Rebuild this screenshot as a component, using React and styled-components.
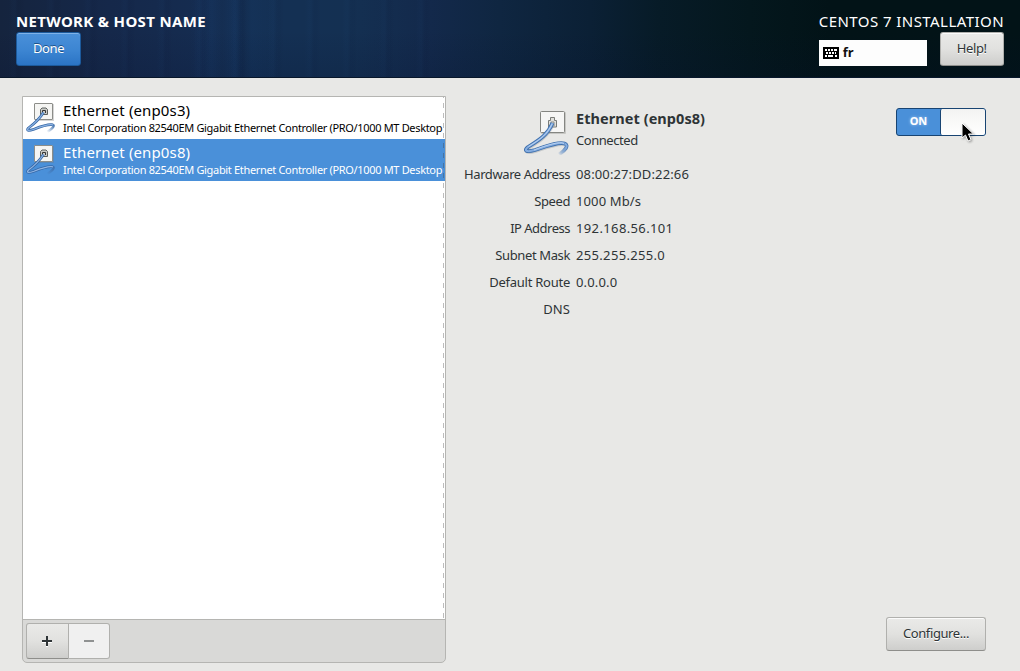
import React from "react";
import styled, { createGlobalStyle, css } from "styled-components";

const GlobalStyle = createGlobalStyle`
  * { box-sizing: border-box; }
  body {
    margin: 0;
    background: #e8e8e6;
    color: #2e3436;
    font: 13px/20px "Noto Sans", "Open Sans", sans-serif;
    overflow: hidden;
  }
`;

const Page = styled.div`
  display: flex;
  flex-direction: column;
  width: 1020px;
  height: 671px;
`;

const Header = styled.header`
  display: flex;
  flex: none;
  justify-content: space-between;
  height: 78px;
  padding: 11px 16px 0;
  color: #fff;
  border-bottom: 1px solid #08172b;
  background:
    linear-gradient(rgba(0, 0, 0, 0) 40%, rgba(5, 15, 45, 0.16)),
    repeating-linear-gradient(90.5deg, rgba(40, 100, 170, 0) 0 9px, rgba(40, 100, 170, 0.03) 13px 15px, rgba(0, 0, 30, 0.04) 18px 21px, rgba(0, 0, 0, 0) 25px 37px) 0 0 / 430px 100% no-repeat,
    linear-gradient(90deg, rgba(0, 0, 0, 0) 190px, rgba(24, 66, 120, 0.18) 212px, rgba(0, 0, 0, 0) 222px, rgba(24, 66, 120, 0.16) 234px, rgba(0, 0, 20, 0.06) 243px, rgba(24, 66, 120, 0.1) 252px, rgba(0, 0, 0, 0) 280px),
    linear-gradient(90deg, #15243e 0, #15284a 110px, #152c50 200px, #143054 250px, #143052 350px, #13294b 430px, #0f2641 500px, #0b2035 590px, #071b27 660px, #04171d 750px, #021317 830px, #021317 100%);
`;

const HeaderSide = styled.div`
  display: flex;
  flex-direction: column;
  align-items: flex-start;
`;

const Title = styled.div`
  height: 21px;
  line-height: 21px;
  font-size: 15px;
  font-weight: ${(p) => (p.$bold ? 700 : 400)};
  letter-spacing: ${(p) => (p.$bold ? 0.33 : 0.44)}px;
  white-space: nowrap;
`;

const HeaderControls = styled.div`
  display: flex;
  align-items: flex-end;
  gap: 13px;
`;

const KeyboardLayout = styled.div`
  display: flex;
  align-items: center;
  gap: 4px;
  width: 108px;
  height: 26px;
  padding-left: 4px;
  background: #fdfdfd;
  color: #111;
  font-weight: 700;
  line-height: 24px;
`;

const LayoutName = styled.span`
  height: 26px;
`;

const Button = styled.button`
  display: flex;
  align-items: center;
  justify-content: center;
  width: ${(p) => p.$width}px;
  height: 34px;
  padding: 0 0 3px;
  font: inherit;
  letter-spacing: -0.4px;
  color: #2e3436;
  text-shadow: 0 1px #fff;
  border: 1px solid #b0b0ad;
  border-bottom-color: #8e8e8b;
  border-radius: 3px;
  background: linear-gradient(#eaeae8, #e1e1df 50%, #cececc);
  box-shadow: inset 0 1px #fbfbfb;
  ${(p) =>
    p.$primary &&
    css`
      color: #fff;
      text-shadow: 0 -1px #1c5187;
      border-color: #1c5a9c;
      background: linear-gradient(#4a90d9, #3c85d2 55%, #2b74c5);
      box-shadow: inset 0 1px #7fb2e8;
    `}
`;

const Content = styled.main`
  display: flex;
  flex: 1;
  padding: 18px 34px 8px 22px;
`;

const DevicePanel = styled.section`
  display: flex;
  flex: none;
  flex-direction: column;
  width: 424px;
  height: 567px;
  border: 1px solid #b5b5b2;
  border-radius: 0 0 5px 5px;
  background: #d9d9d7;
  overflow: hidden;
`;

const DeviceList = styled.div`
  position: relative;
  flex: 1;
  background: #fff;
  &::after {
    content: "";
    position: absolute;
    top: 0;
    right: 1px;
    bottom: 0;
    width: 1px;
    background: repeating-linear-gradient(rgba(60, 60, 60, 0.34) 0 1px, transparent 1px 6px, rgba(60, 60, 60, 0.34) 6px 10px);
    background-size: 1px 10px;
  }
`;

const DeviceRow = styled.div`
  display: flex;
  height: 42px;
  padding: 4px 0 0 2px;
  color: ${(p) => (p.$selected ? "#fff" : "#000")};
  background: ${(p) => (p.$selected ? "#4a90d9" : "#fff")};
`;

const DeviceText = styled.div`
  margin-left: 6px;
  white-space: nowrap;
`;

const DeviceName = styled.div`
  height: 19px;
  font-size: 15px;
  line-height: 19px;
  letter-spacing: 0.13px;
`;

const DeviceDetail = styled.div`
  font-size: 11px;
  line-height: 16px;
  letter-spacing: -0.33px;
`;

const ListToolbar = styled.div`
  display: flex;
  height: 43px;
  padding: 3px;
  border-top: 1px solid #b5b5b2;
`;

const ToolButton = styled.button`
  display: flex;
  align-items: center;
  justify-content: center;
  width: ${(p) => (p.$disabled ? 41 : 43)}px;
  height: 36px;
  padding: ${(p) => (p.$disabled ? 0 : "0 1px 0 0")};
  border: 1px solid #b0b0ad;
  border-left-width: ${(p) => (p.$disabled ? 0 : 1)}px;
  border-bottom-color: ${(p) => (p.$disabled ? "#b0b0ad" : "#8e8e8b")};
  border-radius: ${(p) => (p.$disabled ? "0 3px 3px 0" : "3px 0 0 3px")};
  background: ${(p) => (p.$disabled ? "#f0f0f0" : "linear-gradient(#eaeae8, #e1e1df 50%, #cececc)")};
`;

const Details = styled.section`
  display: flex;
  flex: 1;
  justify-content: space-between;
  padding-left: 18px;
`;

const Info = styled.div`
  padding-top: 11px;
`;

const Summary = styled.div`
  display: flex;
  height: 57px;
  padding-left: 58px;
`;

const SummaryText = styled.div`
  margin-left: 6px;
  line-height: 22px;
`;

const Heading = styled.div`
  font-size: 14.5px;
  font-weight: 700;
  letter-spacing: 0.06px;
  white-space: nowrap;
`;

const Property = styled.div`
  display: grid;
  grid-template-columns: 106px auto;
  column-gap: 6px;
  height: 27px;
  white-space: nowrap;
`;

const Label = styled.div`
  text-align: right;
  letter-spacing: ${(p) => p.$spacing}px;
`;

const Value = styled.div`
  letter-spacing: ${(p) => p.$spacing}px;
`;

const Actions = styled.div`
  display: flex;
  flex-direction: column;
  align-items: flex-end;
  justify-content: space-between;
  padding: 12px 0;
`;

const Switch = styled.div`
  position: relative;
  display: flex;
  width: 90px;
  height: 28px;
  border: 1px solid #184472;
  border-radius: 3px;
  background: #4a90d9;
`;

const SwitchLabel = styled.div`
  width: 43px;
  color: #fff;
  font-size: 11px;
  font-weight: 700;
  line-height: 24px;
  text-align: center;
  text-shadow: 0 0 3px #a5c9ef;
`;

const SwitchKnob = styled.div`
  width: 45px;
  border-left: 1px solid #184472;
  border-radius: 2px;
  background: linear-gradient(#f3f3f2, #fff);
`;

const Pointer = styled.svg`
  position: absolute;
  left: 63px;
  top: 12px;
  filter: drop-shadow(1px 1px 1px rgba(0, 0, 0, 0.35));
`;

const IconCanvas = styled.svg`
  flex: none;
`;

function CableFade({ id, color, from, to }) {
  return (
    <linearGradient id={id} gradientUnits="userSpaceOnUse" x1={from[0]} y1={from[1]} x2={to[0]} y2={to[1]}>
      <stop offset="0" stopColor={color} />
      <stop offset="1" stopColor={color} stopOpacity="0" />
    </linearGradient>
  );
}

function EthernetIcon() {
  const cable = "M30.500 16C26 27 19 32 6 40C1.500 43.500 4 45.500 13 43C25 39 37 34.500 42.500 36.500";
  const tail = "M42.500 36.500C47.500 38.500 43 43.500 37 47.500";
  return (
    <IconCanvas width="48" height="48" viewBox="0 0 48 48" fill="none">
      <defs>
        <CableFade id="cable-edge" color="#3f70ad" from={[44, 40]} to={[37, 48]} />
        <CableFade id="cable-core" color="#85ade0" from={[44, 40]} to={[37, 48]} />
      </defs>
      <rect x="19" y="5" width="25" height="22" rx="1" fill="#a5a5a2" opacity=".5" />
      <rect x="18.500" y="4.500" width="24" height="21" rx="1" fill="#f6f6f5" stroke="#858682" />
      <path d="M26.500 20v-6.500h2v-3h4v3h2V20z" fill="#e0e0dc" stroke="#7b7d79" />
      <path d="M29 19v-4h3v4" stroke="#8b8d89" />
      <path d={cable} transform="translate(.5 1)" stroke="#77818c" strokeWidth="3.600" opacity=".3" />
      <path d={tail} stroke="url(#cable-edge)" strokeWidth="3.600" />
      <path d={tail} stroke="url(#cable-core)" strokeWidth="2" />
      <path d={cable} stroke="#3f70ad" strokeWidth="3.700" />
      <path d={cable} stroke="#85ade0" strokeWidth="2" />
      <path d="M30 17C25.500 27 19 32 6.500 39.500M12 43C25 38 38 34 42 36.500" stroke="#c5dbf5" strokeWidth=".8" />
    </IconCanvas>
  );
}

function SmallEthernetIcon() {
  const cable = "M18.500 11.500C15 17 11 21.500 3.500 27C.5 30.500 5 29.500 9 28.200C17 25 24 23 28 23.800";
  const tail = "M28 23.800C30 25 26.500 28.500 22 31";
  return (
    <IconCanvas width="32" height="32" viewBox="0 0 32 32" fill="none">
      <defs>
        <CableFade id="small-cable-edge" color="#3f70ad" from={[29, 24]} to={[22, 31]} />
      </defs>
      <rect x="10" y="3" width="19" height="17" fill="#777" opacity=".3" />
      <rect x="9.500" y="2.500" width="18" height="16" rx=".5" fill="#f5f5f3" stroke="#8c8d89" />
      <path d="M15.500 13.500v-5l1.500-1.500h4l1.500 1.500v5z" fill="#c9cac6" stroke="#5d605e" />
      <path d="M17.500 12v-2.500h3V12" stroke="#333" />
      <path d={tail} stroke="url(#small-cable-edge)" strokeWidth="2.400" />
      <path d={cable} stroke="#3567a6" strokeWidth="2.700" />
      <path d={cable} stroke="#8fb5e4" strokeWidth="1.200" />
    </IconCanvas>
  );
}

function KeyboardIcon() {
  return (
    <svg width="16" height="12" viewBox="0 0 16 12" shapeRendering="crispEdges">
      <rect width="16" height="12" rx="1" fill="#000" />
      <path
        d="M2 2h2v2H2zM5 2h2v2H5zM8 2h2v2H8zM11 2h3v2h-3zM3 5h2v2H3zM6 5h2v2H6zM9 5h2v2H9zM12 5h1v2h-1zM2 8h2v2H2zM5 8h5v2H5zM12 8h2v2h-2z"
        fill="#fff"
      />
    </svg>
  );
}

const devices = [
  { name: "Ethernet (enp0s3)", selected: false },
  { name: "Ethernet (enp0s8)", selected: true },
];

const properties = [
  { label: "Hardware Address", labelSpacing: -0.4, value: "08:00:27:DD:22:66", valueSpacing: 0.13 },
  { label: "Speed", labelSpacing: -0.4, value: "1000 Mb/s", valueSpacing: 0.12 },
  { label: "IP Address", labelSpacing: -0.5, value: "192.168.56.101", valueSpacing: 0.37 },
  { label: "Subnet Mask", labelSpacing: -0.38, value: "255.255.255.0", valueSpacing: 0.33 },
  { label: "Default Route", labelSpacing: -0.25, value: "0.0.0.0", valueSpacing: 0.15 },
  { label: "DNS", labelSpacing: 0.1, value: "", valueSpacing: 0 },
];

export default function App() {
  return (
    <Page>
      <GlobalStyle />
      <Header>
        <HeaderSide>
          <Title $bold>NETWORK &amp; HOST NAME</Title>
          <Button $primary $width={65}>Done</Button>
        </HeaderSide>
        <HeaderSide>
          <Title>CENTOS 7 INSTALLATION</Title>
          <HeaderControls>
            <KeyboardLayout>
              <KeyboardIcon />
              <LayoutName>fr</LayoutName>
            </KeyboardLayout>
            <Button $width={64}>Help!</Button>
          </HeaderControls>
        </HeaderSide>
      </Header>
      <Content>
        <DevicePanel>
          <DeviceList>
            {devices.map((d) => (
              <DeviceRow key={d.name} $selected={d.selected}>
                <SmallEthernetIcon />
                <DeviceText>
                  <DeviceName>{d.name}</DeviceName>
                  <DeviceDetail>Intel Corporation 82540EM Gigabit Ethernet Controller (PRO/1000 MT Desktop</DeviceDetail>
                </DeviceText>
              </DeviceRow>
            ))}
          </DeviceList>
          <ListToolbar>
            <ToolButton aria-label="Add">
              <svg width="12" height="12" shapeRendering="crispEdges">
                <path d="M1 6h10v2H1zM5 2h2v10H5z" fill="#fff" />
                <path d="M1 5h10v2H1zM5 1h2v10H5z" fill="#2e3436" />
              </svg>
            </ToolButton>
            <ToolButton $disabled aria-label="Remove">
              <svg width="12" height="12" shapeRendering="crispEdges">
                <path d="M1 5h10v2H1z" fill="#8f9191" />
              </svg>
            </ToolButton>
          </ListToolbar>
        </DevicePanel>
        <Details>
          <Info>
            <Summary>
              <EthernetIcon />
              <SummaryText>
                <Heading>Ethernet (enp0s8)</Heading>
                <Value $spacing={-0.45}>Connected</Value>
              </SummaryText>
            </Summary>
            {properties.map((p) => (
              <Property key={p.label}>
                <Label $spacing={p.labelSpacing}>{p.label}</Label>
                <Value $spacing={p.valueSpacing}>{p.value}</Value>
              </Property>
            ))}
          </Info>
          <Actions>
            <Switch>
              <SwitchLabel>ON</SwitchLabel>
              <SwitchKnob />
              <Pointer width="16" height="22" viewBox="0 0 16 22">
                <path d="M2 2v15l3.500-3 2.500 6 3-1.300-2.500-5.700h5z" fill="#000" stroke="#fff" strokeWidth="1" />
              </Pointer>
            </Switch>
            <Button $width={100}>Configure...</Button>
          </Actions>
        </Details>
      </Content>
    </Page>
  );
}
